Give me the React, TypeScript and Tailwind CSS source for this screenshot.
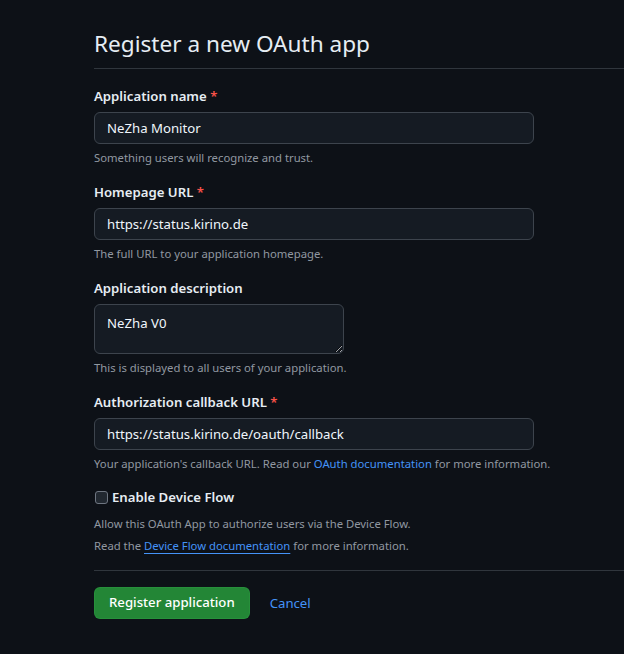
import React from "react";

export default function App() {
  const font = { fontFamily: '"Noto Sans", "Liberation Sans", sans-serif' };
  const inputCls =
    "mt-[6px] block w-[440px] h-[32px] px-[12px] rounded-[6px] border border-[#3d444d] bg-[#151b23] text-[13.2px] text-[#f0f6fc] outline-none";
  const hintCls = "text-[11.3px] leading-[16px] text-[#9198a1]";
  const labelCls = "block text-[13.2px] leading-[20px] font-semibold";
  return (
    <div className="min-h-[654px] w-[624px] bg-[#0d1117] text-[#e6edf3] overflow-hidden" style={font}>
      <div className="pl-[94px] pt-[29px]">
        <h1 className="text-[22.6px] leading-[30px] font-normal pb-[9px] border-b border-[#30363d]">Register a new OAuth app</h1>

        <div className="pt-[17px]">
          <label className={labelCls}>
            Application name <span className="text-[#f85149]">*</span>
          </label>
          <input readOnly value="NeZha Monitor" className={inputCls} />
          <p className={"mt-[6px] " + hintCls}>Something users will recognize and trust.</p>
        </div>

        <div className="pt-[16px]">
          <label className={labelCls}>
            Homepage URL <span className="text-[#f85149]">*</span>
          </label>
          <input readOnly value="https://status.kirino.de" className={inputCls} />
          <p className={"mt-[6px] " + hintCls}>The full URL to your application homepage.</p>
        </div>

        <div className="pt-[16px]">
          <label className={labelCls}>Application description</label>
          <textarea
            readOnly
            value="NeZha V0"
            className="mt-[6px] block w-[250px] h-[50px] px-[12px] pt-[8px] pb-[4px] rounded-[6px] border border-[#3d444d] bg-[#151b23] text-[13.2px] leading-[20px] text-[#f0f6fc] outline-none resize"
          />
          <p className={"mt-[6px] " + hintCls}>This is displayed to all users of your application.</p>
        </div>

        <div className="pt-[16px]">
          <label className={labelCls}>
            Authorization callback URL <span className="text-[#f85149]">*</span>
          </label>
          <input readOnly value="https://status.kirino.de/oauth/callback" className={inputCls} />
          <p className={"mt-[6px] " + hintCls}>
            Your application's callback URL. Read our <a className="text-[#4493f8]">OAuth documentation</a> for more information.
          </p>
        </div>

        <div className="pt-[15px]">
          <div className="flex items-center gap-[4px]">
            <span className="inline-block ml-[1px] w-[13px] h-[13px] rounded-[3px] border border-[#6e7681] bg-[#212830]" />
            <span className="text-[13.2px] leading-[20px] font-semibold">Enable Device Flow</span>
          </div>
          <p className={"mt-[9px] " + hintCls}>Allow this OAuth App to authorize users via the Device Flow.</p>
          <p className={"mt-[6px] " + hintCls}>
            Read the <a className="text-[#4493f8] underline underline-offset-[3px]">Device Flow documentation</a> for more information.
          </p>
        </div>

        <div className="mt-[16px] border-t border-[#30363d]" />

        <div className="pt-[16px] flex items-center gap-[20px]">
          <button className="h-[32px] px-[14px] rounded-[6px] bg-[#238636] border border-[#2ea043]/40 text-white text-[13.2px] font-medium">
            Register application
          </button>
          <a className="text-[13.2px] text-[#4493f8] pt-[2px]">Cancel</a>
        </div>
      </div>
    </div>
  );
}
